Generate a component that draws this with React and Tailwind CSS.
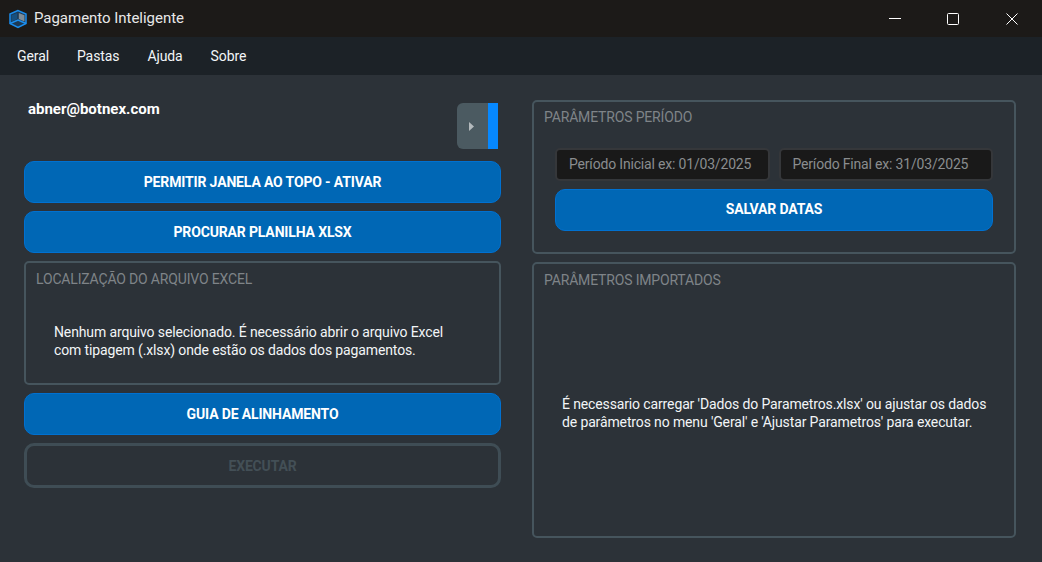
import React from "react";

const Btn = ({ children, className = "" }) => (
  <button className={`h-[42px] w-full rounded-[10px] border border-[#0071d1] bg-[#0067b5] text-[14px] font-bold tracking-[-0.15px] text-white ${className}`}>
    {children}
  </button>
);

const Legend = ({ children }) => (
  <div className="text-[14px] leading-[16px] tracking-[-0.17px] text-[#7f8488]">{children}</div>
);

const Input = ({ placeholder }) => (
  <div className="flex h-[33px] flex-1 items-center rounded-[5px] border-2 border-[#35373a] bg-[#191919] pl-[12px] text-[14px] tracking-[-0.18px] text-[#8a8d8f]">
    {placeholder}
  </div>
);

const App = () => {
  return (
    <div className="flex h-[562px] w-[1042px] flex-col overflow-hidden bg-[#2c3238] font-['Roboto',sans-serif] text-white">
      <div className="flex h-[37px] shrink-0 items-center bg-[#1c1a18] pl-[8px]">
        <svg width="20" height="20" viewBox="0 0 20 20" fill="none">
          <path d="M10 1.500 2 5v9.500l8 4 8-4V5z" fill="#1d3a55" stroke="#1a8cec" strokeWidth="1.500" />
          <path d="M2 14.500 10 11l8 3.500" stroke="#1c8fee" strokeWidth="1.500" />
          <path d="M10.800 4 16.500 6.200v6.300L10.800 10z" fill="#7d8c98" />
          <path d="M3.500 6.200 9.200 4V10L3.500 12.500z" fill="#17507f" />
        </svg>
        <span className="ml-[6px] text-[15px] tracking-[-0.03px] text-[#e8e8e8]">Pagamento Inteligente</span>
        <div className="ml-auto flex items-center pr-[24px]">
          <svg width="12" height="12" viewBox="0 0 12 12"><path d="M0 5.500h12" stroke="#fff" strokeWidth="1" /></svg>
          <svg className="ml-[46px]" width="12" height="12" viewBox="0 0 12 12" fill="none"><rect x=".5" y=".5" width="11" height="11" rx="1" stroke="#fff" /></svg>
          <svg className="ml-[47px]" width="12" height="12" viewBox="0 0 12 12"><path d="M.5.500l11 11M11.500.500l-11 11" stroke="#fff" strokeWidth="1" /></svg>
        </div>
      </div>

      <div className="flex h-[38px] shrink-0 items-center gap-[28px] bg-[#1c2227] pl-[17px] text-[14px] tracking-[-0.1px] text-[#f2f5f7]">
        <span>Geral</span>
        <span>Pastas</span>
        <span>Ajuda</span>
        <span>Sobre</span>
      </div>

      <div className="flex flex-1 pl-[24px] pt-[25px]">
        <div className="flex w-[477px] flex-col">
          <div className="flex h-[61px] items-start justify-between">
            <span className="ml-[4px] text-[15px] leading-[18px] font-bold">abner@botnex.com</span>
            <div className="mr-[3px] mt-[3px] flex h-[46px] w-[41px] overflow-hidden rounded-l-[6px] bg-[#4b5a61]">
              <div className="flex flex-1 items-center justify-center pr-[3px] pt-[1px]">
                <svg width="5" height="9" viewBox="0 0 5 9"><path d="M0 0l5 4.500-5 4.500z" fill="#b4babd" /></svg>
              </div>
              <div className="w-[10px] bg-[#0688ff]" />
            </div>
          </div>
          <div className="flex flex-col gap-[8px]">
            <Btn>PERMITIR JANELA AO TOPO - ATIVAR</Btn>
            <Btn>PROCURAR PLANILHA XLSX</Btn>
            <div className="h-[124px] rounded-[5px] border-2 border-[#46555d] px-[10px] pt-[8px]">
              <Legend>LOCALIZAÇÃO DO ARQUIVO EXCEL</Legend>
              <p className="mt-[36px] ml-[18px] text-[14px] leading-[18px] tracking-[-0.13px] text-[#f2f5f7]">
                Nenhum arquivo selecionado. É necessário abrir o arquivo Excel
                <br />
                com tipagem (.xlsx) onde estão os dados dos pagamentos.
              </p>
            </div>
            <Btn>GUIA DE ALINHAMENTO</Btn>
            <button className="h-[45px] w-full rounded-[10px] border-[3px] border-[#3f4d55] pt-[2px] text-[14px] font-bold tracking-[-0.15px] text-[#434f56]">
              EXECUTAR
            </button>
          </div>
        </div>

        <div className="ml-[31px] flex h-[438px] w-[484px] flex-col gap-[8px]">
          <div className="h-[154px] rounded-[5px] border-2 border-[#46555d] px-[10px] pt-[7px]">
            <Legend>PARÂMETROS PERÍODO</Legend>
            <div className="mx-[11px] mt-[23px] flex flex-col gap-[8px]">
              <div className="flex gap-[9px]">
                <Input placeholder="Período Inicial ex: 01/03/2025" />
                <Input placeholder="Período Final ex: 31/03/2025" />
              </div>
              <Btn className="pb-[2px]">SALVAR DATAS</Btn>
            </div>
          </div>
          <div className="flex flex-1 flex-col rounded-[5px] border-2 border-[#46555d] px-[10px] pt-[8px]">
            <Legend>PARÂMETROS IMPORTADOS</Legend>
            <p className="ml-[18px] mt-[107px] text-[14px] leading-[18px] tracking-[-0.13px] text-[#f2f5f7]">
              É necessario carregar 'Dados do Parametros.xlsx' ou ajustar os dados
              <br />
              de parâmetros no menu 'Geral' e 'Ajustar Parametros' para executar.
            </p>
          </div>
        </div>
      </div>
    </div>
  );
};

export default App;
